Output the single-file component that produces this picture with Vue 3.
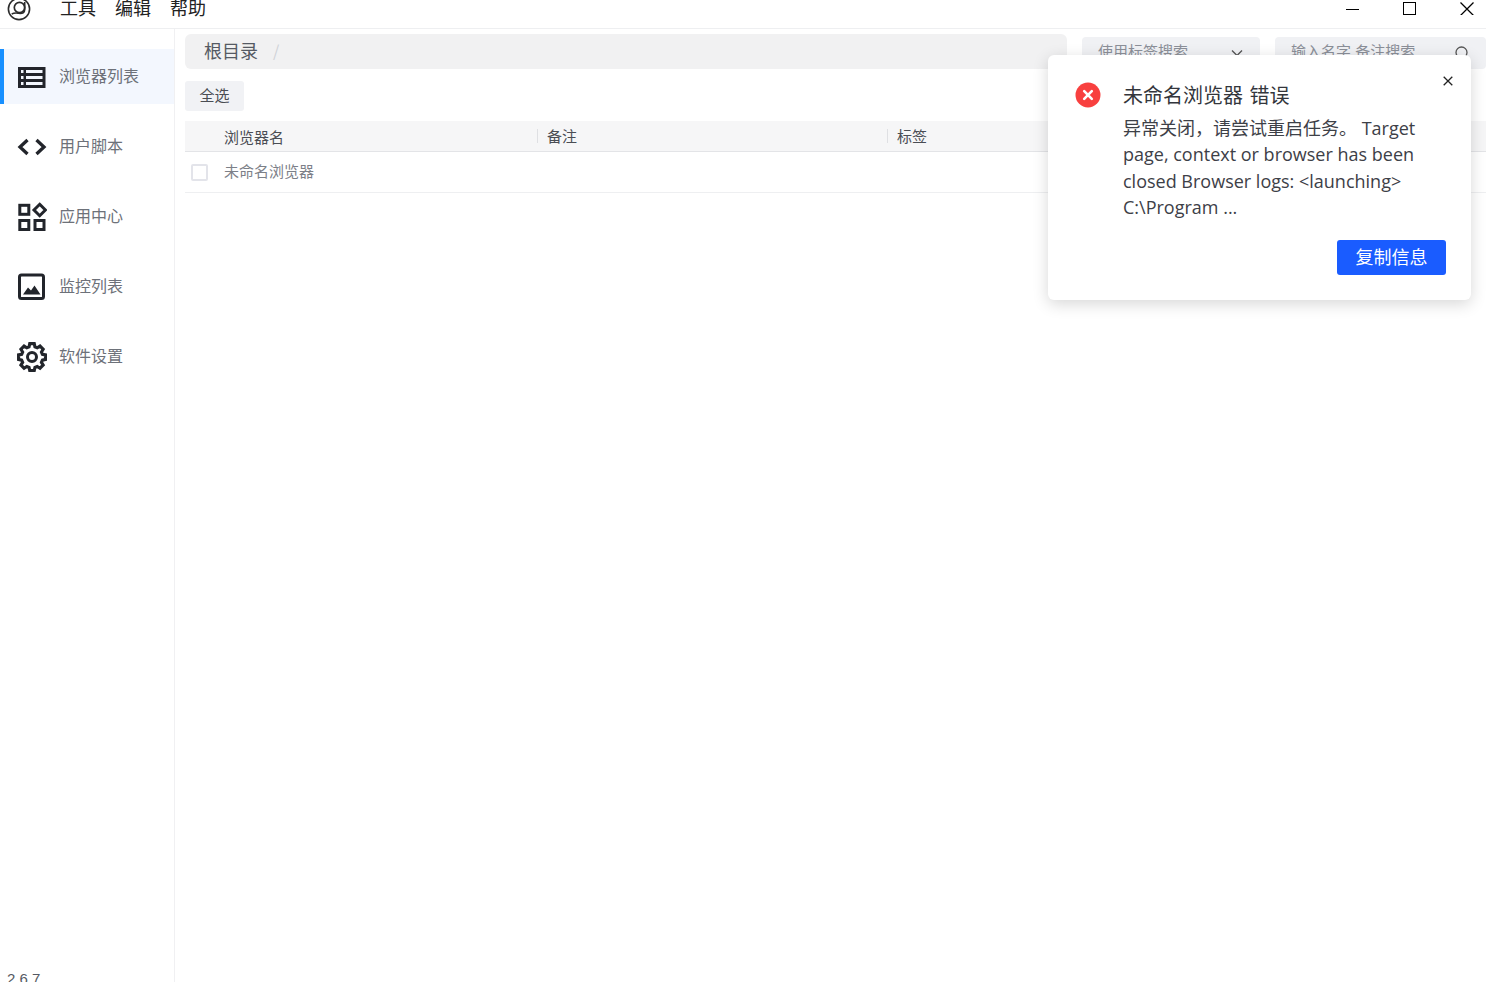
<template>
  <div class="app">
    <header class="topbar">
      <svg class="logo" width="26" height="26" viewBox="0 0 26 26" fill="none" stroke="#2b2b2b">
        <circle cx="13" cy="13" r="10.6" stroke-width="1.600" />
        <circle cx="13.500" cy="11.500" r="5.200" stroke-width="1.700" />
        <path d="M18.700 6v7.500c0 3-2 4.300-6 3.800-2-.3-4-.8-7 .7" stroke-width="1.600" />
      </svg>
      <nav class="menu">
        <span>工具</span>
        <span>编辑</span>
        <span>帮助</span>
      </nav>
      <div class="win-controls">
        <svg width="14" height="14" viewBox="0 0 14 14" stroke="#000" fill="none"><path d="M0 8.500h13" /></svg>
        <svg width="14" height="14" viewBox="0 0 14 14" stroke="#000" fill="none"><rect x="0.500" y="1.500" width="12" height="12" /></svg>
        <svg width="14" height="14" viewBox="0 0 14 14" stroke="#000" stroke-width="1.300" fill="none"><path d="M.5 1.500l13 13M13.500 1.500l-13 13" /></svg>
      </div>
    </header>
    <div class="body">
      <aside class="sidebar">
        <div v-for="item in menu" :key="item.label" class="nav-item" :class="{ active: item.active }">
          <svg class="nav-icon" width="30" height="30" viewBox="0 0 30 30" fill="none" stroke="#22252b" stroke-width="3" v-html="item.icon"></svg>
          <span class="nav-label">{{ item.label }}</span>
        </div>
        <div class="version">2.6.7</div>
      </aside>
      <main class="content">
        <div class="top-row">
          <div class="crumbs"><span class="root">根目录</span><span class="slash">/</span></div>
          <div class="select"><span class="ph">使用标签搜索</span>
            <svg width="12" height="12" viewBox="0 0 12 12" fill="none" stroke="#555"><path d="M1 3.500l5 5 5-5" stroke-width="1.300" /></svg>
          </div>
          <div class="search"><span class="ph">输入名字,备注搜索</span>
            <svg width="16" height="16" viewBox="0 0 16 16" fill="none" stroke="#555" stroke-width="1.300"><circle cx="7.500" cy="7.500" r="5.500" /><path d="M11.500 11.500l3 3" /></svg>
          </div>
        </div>
        <div class="select-all">全选</div>
        <div class="thead">
          <div class="cell-name">浏览器名</div>
          <div class="cell-note"><i></i>备注</div>
          <div class="cell-tag"><i></i>标签</div>
        </div>
        <div class="row">
          <span class="check"></span>
          <span class="row-name">未命名浏览器</span>
        </div>
      </main>
    </div>
    <section class="notice">
      <svg class="err" width="26" height="26" viewBox="0 0 26 26">
        <circle cx="13" cy="13" r="12.500" fill="#f8403f" />
        <path d="M9.200 9.200l7.600 7.600M16.800 9.200l-7.600 7.600" stroke="#fff" stroke-width="2.600" stroke-linecap="round" />
      </svg>
      <div class="notice-main">
        <div class="notice-title">未命名浏览器 错误</div>
        <div class="notice-text">异常关闭&#xFF0C;请尝试重启任务。 Target page, context or browser has been closed Browser logs: &lt;launching&gt; C:\Program ...</div>
        <div class="notice-actions"><button class="copy"><span>复制信息</span></button></div>
      </div>
      <svg class="close" width="10" height="10" viewBox="0 0 10 10" stroke="#222" stroke-width="1.300" fill="none"><path d="M.7.700l8.600 8.600M9.300.7L.7 9.300" /></svg>
    </section>
  </div>
</template>

<script setup>
const menu = [
  { label: '浏览器列表', active: true, icon: '<path fill="#22252b" stroke="none" fill-rule="evenodd" d="M1 5h27.500v21H1zM4 8v3h2.500V8zM9 8v3h16.500V8zM4 14v3h2.500v-3zM9 14v3h16.500v-3zM4 20v3h2.500v-3zM9 20v3h16.500v-3z"/>' },
  { label: '用户脚本', icon: '<path d="M10.500 8l-7.500 7 7.500 7M19.500 8l7.500 7-7.500 7" stroke-width="3.300"/>' },
  { label: '应用中心', icon: '<rect x="2.800" y="3.300" width="9" height="9"/><rect x="2.800" y="18.500" width="9" height="9"/><rect x="18" y="18.500" width="9" height="9"/><path d="M22.700 2.300l5.700 5.700-5.700 5.700-5.700-5.700z"/>' },
  { label: '监控列表', icon: '<rect x="2.500" y="3" width="24" height="23.500" rx="2"/><path d="M6 22.500l5-7 3 3 3.500-5 6 9z" fill="#22252b" stroke="none"/>' },
  { label: '软件设置', icon: '<path d="M12.500 2.500h5l.8 3.500 2.500 1.100 3.100-1.900 3.500 3.500-1.900 3.100 1.100 2.500 3.400.7v5l-3.400.8-1.100 2.500 1.900 3-3.500 3.500-3.100-1.900-2.500 1.100-.8 3.400h-5l-.8-3.400-2.500-1.100-3 1.900-3.500-3.500 1.900-3-1.100-2.500-3.400-.8v-5l3.400-.7 1.100-2.500-1.900-3.100 3.500-3.500 3 1.900 2.500-1.100z" transform="translate(1.500 -.6) scale(.9)" stroke-width="3.500"/><circle cx="15" cy="15" r="4.500"/>' },
]
</script>

<style scoped>
.app {
  position: relative;
  width: 1486px;
  height: 982px;
  overflow: hidden;
  background: #fff;
  font-family: "Noto Sans CJK SC", "Open Sans", sans-serif;
  color: #33363c;
}
.topbar {
  box-sizing: border-box;
  height: 29px;
  border-bottom: 1px solid #eeeff1;
  display: flex;
  align-items: flex-end;
  padding: 0 12px 0 6px;
  overflow: hidden;
}
.logo { margin-bottom: 6px; flex: none; margin-top: -6px; }
.menu {
  display: flex;
  gap: 19px;
  margin-left: 28px;
  font-size: 18px;
  line-height: 26px;
  height: 32px;
  align-self: flex-start;
  margin-top: -6px;
  color: #222;
}
.win-controls {
  margin-left: auto;
  display: flex;
  gap: 43px;
  align-self: flex-start;
  padding-top: 1px;
}
.body { display: flex; height: 953px; }
.sidebar {
  position: relative;
  box-sizing: border-box;
  width: 175px;
  flex: none;
  border-right: 1px solid #f0f0f2;
  padding-top: 20px;
  display: flex;
  flex-direction: column;
  gap: 15px;
}
.nav-item {
  height: 55px;
  display: flex;
  align-items: center;
  padding-left: 17px;
  gap: 12px;
  font-size: 16px;
  color: #6d7179;
}
.nav-label { margin-bottom: 4px; }
.nav-item.active {
  background: #f3f7fe;
  box-shadow: inset 4px 0 0 #1890ff;
}
.nav-icon { flex: none; }
.version {
  position: absolute;
  left: 7px;
  bottom: -6px;
  font-family: "Liberation Sans", sans-serif;
  font-size: 15px;
  color: #555a63;
  line-height: 18px;
}
.content { flex: 1; padding: 5px 0 0 10px; min-width: 0; }
.top-row { display: flex; align-items: flex-start; height: 35px; }
.crumbs {
  width: 882px;
  height: 35px;
  background: #f1f1f2;
  border-radius: 6px;
  display: flex;
  align-items: center;
  padding: 0 0 4px 19px;
  box-sizing: border-box;
  font-size: 18px;
  color: #555a63;
}
.slash { margin-left: 15px; color: #cfd2d7; font-size: 16px; }
.select, .search {
  margin-top: 3px;
  height: 32px;
  background: #f0f1f4;
  border-radius: 4px;
  display: flex;
  align-items: center;
  justify-content: space-between;
  box-sizing: border-box;
  font-size: 15px;
  color: #8b8f98;
}
.ph { margin-bottom: 5px; }
.select { width: 178px; margin-left: 15px; padding: 0 17px 0 16px; }
.search { width: 211px; margin-left: 15px; padding: 0 16px 0 16px; }
.select-all {
  margin-top: 12px;
  width: 59px;
  height: 30px;
  background: #f1f2f5;
  border-radius: 3px;
  font-size: 15px;
  line-height: 28px;
  text-align: center;
  color: #4a4d54;
}
.thead {
  margin-top: 10px;
  height: 31px;
  background: #f6f6f7;
  border-bottom: 1px solid #e3e4e7;
  box-sizing: border-box;
  display: grid;
  grid-template-columns: 352px 350px 1fr;
  align-items: center;
  font-size: 15px;
  color: #4a4d54;
}
.cell-name { padding-left: 39px; }
.cell-note, .cell-tag { padding-left: 10px; padding-bottom: 2px; position: relative; }
.thead i {
  position: absolute;
  left: 0;
  top: 4px;
  height: 14px;
  width: 1px;
  background: #dfe0e3;
}
.row {
  height: 41px;
  border-bottom: 1px solid #eeeff1;
  box-sizing: border-box;
  display: flex;
  align-items: center;
  padding-left: 6px;
  font-size: 15px;
  color: #7c8088;
}
.check {
  box-sizing: border-box;
  width: 17px;
  height: 17px;
  border: 2px solid #e3e4ea;
  border-radius: 2px;
}
.row-name { margin-left: 16px; margin-bottom: 3px; }
.notice {
  position: absolute;
  left: 1048px;
  top: 55px;
  width: 423px;
  height: 245px;
  box-sizing: border-box;
  background: #fff;
  border-radius: 6px;
  box-shadow: 0 4px 16px rgba(0, 0, 0, 0.16);
  padding: 27px 25px 0 27px;
  display: flex;
}
.err { flex: none; }
.notice-main { margin-left: 22px; flex: 1; min-width: 0; }
.notice-title { font-size: 20px; line-height: 26px; color: #33363c; word-spacing: 2px; }
.notice-text {
  margin-top: 7px;
  font-size: 18px;
  line-height: 26.400px;
  color: #3d4047;
  font-family: "Open Sans", "Noto Sans CJK SC", sans-serif;
}
.notice-actions { display: flex; justify-content: flex-end; margin-top: 19px; }
.copy {
  width: 109px;
  height: 35px;
  border: 0;
  border-radius: 3px;
  background: #1a5cff;
  color: #fff;
  font-family: inherit;
  font-size: 18px;
  padding: 0 0 2px;
}
.close { position: absolute; left: 395px; top: 21px; }
</style>
